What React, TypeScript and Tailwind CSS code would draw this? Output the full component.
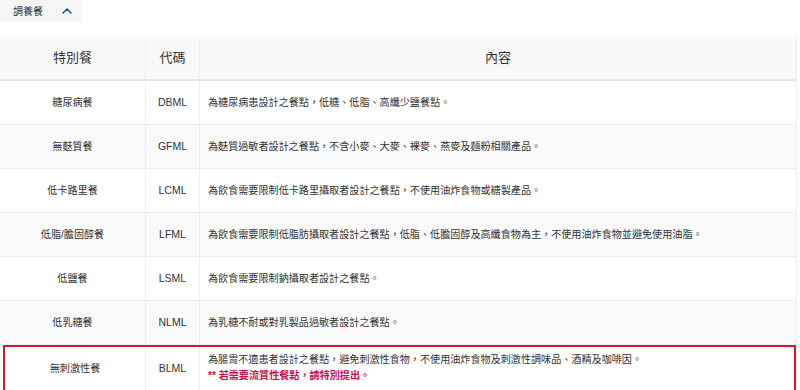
import { ChevronUp } from "lucide-react"

type Meal = { name: string; code: string; desc: string; note?: string }

const meals: Meal[] = [
    { name: "糖尿病餐", code: "DBML", desc: "為糖尿病患設計之餐點，低糖、低脂、高纖少鹽餐點。" },
    { name: "無麩質餐", code: "GFML", desc: "為麩質過敏者設計之餐點，不含小麥、大麥、裸麥、燕麥及麵粉相關產品。" },
    { name: "低卡路里餐", code: "LCML", desc: "為飲食需要限制低卡路里攝取者設計之餐點，不使用油炸食物或糖製產品。" },
    { name: "低脂/膽固醇餐", code: "LFML", desc: "為飲食需要限制低脂肪攝取者設計之餐點，低脂、低膽固醇及高纖食物為主，不使用油炸食物並避免使用油脂。" },
    { name: "低鹽餐", code: "LSML", desc: "為飲食需要限制鈉攝取者設計之餐點。" },
    { name: "低乳糖餐", code: "NLML", desc: "為乳糖不耐或對乳製品過敏者設計之餐點。" },
    { name: "無刺激性餐", code: "BLML", desc: "為腸胃不適患者設計之餐點，避免刺激性食物，不使用油炸食物及刺激性調味品、酒精及咖啡因。", note: "** 若需要流質性餐點，請特別提出。" },
]

export default function App() {
    return (
        <div className="w-[800px] h-[390px] overflow-hidden bg-white text-[#333] font-['Liberation_Sans','Noto_Sans_CJK_TC',sans-serif]">
            <div className="flex items-center w-[81px] h-[22px] bg-[#f5f5f5] pl-[13px]">
                <span className="text-[10px]">調養餐</span>
                <ChevronUp className="ml-[16px] w-[16px] h-[16px] text-[#1d4f86]" strokeWidth={2.2} />
            </div>

            <div className="mt-[15px] w-[797px] border-r border-[#eee]">
                <div className="grid grid-cols-[146px_54px_1fr] h-[44px] bg-[#f9f9f9] border-b-2 border-[#e6e6e6] text-[13px]">
                    <div className="flex items-center justify-center border-r border-[#eee]">特別餐</div>
                    <div className="flex items-center justify-center border-r border-[#eee]">代碼</div>
                    <div className="flex items-center justify-center">內容</div>
                </div>
                {meals.map((m, i) => (
                    <div
                        key={m.code}
                        className={
                            "grid text-[10.1px] " +
                            (m.note
                                ? "grid-cols-[141px_54px_1fr] h-[48px] border-2 border-[#cc1f2d] ml-[3px] bg-white"
                                : "grid-cols-[146px_54px_1fr] h-[44px] border-b border-[#eee] " + (i % 2 === 1 ? "bg-[#fafafa]" : "bg-white"))
                        }
                    >
                        <div className="flex items-center justify-center border-r border-[#eee]">{m.name}</div>
                        <div className="flex items-center justify-center border-r border-[#eee] text-[10.5px]">{m.code}</div>
                        <div className={"flex flex-col justify-center pl-[8px] leading-[16px] " + (m.note ? "pb-[3px]" : "")}>
                            <span>{m.desc}</span>
                            {m.note && <span className="font-bold text-[#c8134f]">{m.note}</span>}
                        </div>
                    </div>
                ))}
            </div>
        </div>
    )
}
